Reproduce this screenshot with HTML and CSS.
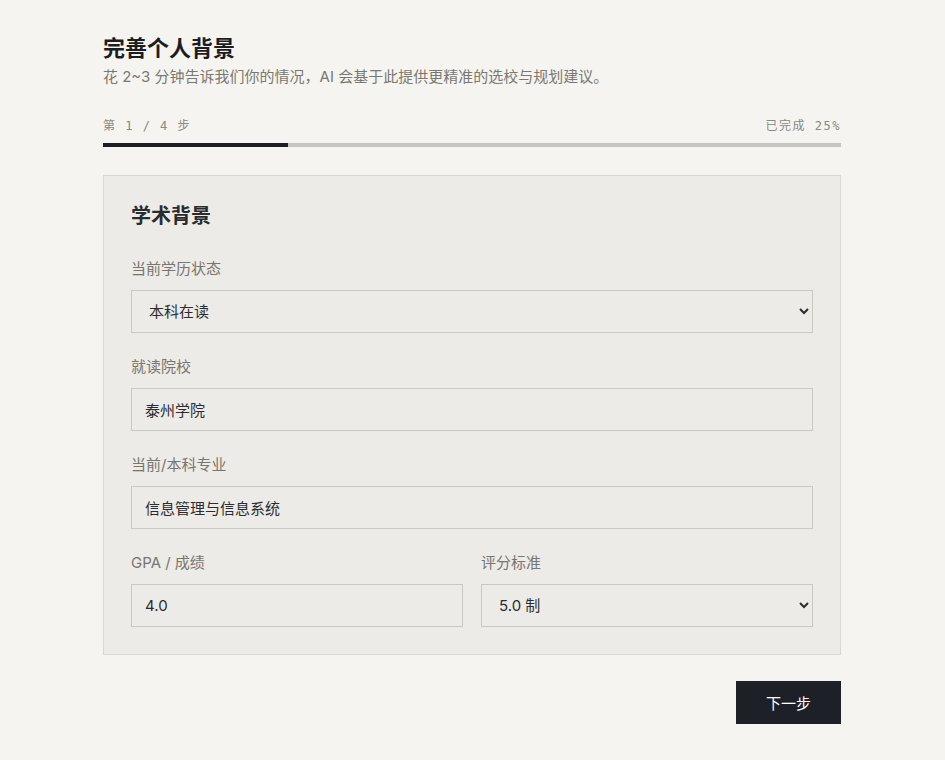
FILE: index.html
```html
<!DOCTYPE html>
<html lang="zh-CN">
<head>
<meta charset="utf-8">
<title>完善个人背景</title>
<link rel="stylesheet" href="styles.css">
</head>
<body>
<main class="page">
  <h1 class="title">完善个人背景</h1>
  <p class="subtitle">花 2~3 分钟告诉我们你的情况，AI 会基于此提供更精准的选校与规划建议。</p>

  <div class="steps">
    <span>第 1 / 4 步</span>
    <span>已完成 25%</span>
  </div>
  <div class="progress"><div class="progress-fill" style="width:25%"></div></div>

  <section class="card">
    <h2 class="card-title">学术背景</h2>

    <div class="field">
      <label class="label" for="status">当前学历状态</label>
      <select class="control" id="status">
        <option>本科在读</option>
        <option>本科毕业</option>
        <option>硕士在读</option>
      </select>
    </div>

    <div class="field">
      <label class="label" for="school">就读院校</label>
      <input class="control" id="school" type="text" value="泰州学院">
    </div>

    <div class="field">
      <label class="label" for="major">当前/本科专业</label>
      <input class="control" id="major" type="text" value="信息管理与信息系统">
    </div>

    <div class="row">
      <div class="field">
        <label class="label" for="gpa">GPA / 成绩</label>
        <input class="control" id="gpa" type="text" value="4.0">
      </div>
      <div class="field">
        <label class="label" for="scale">评分标准</label>
        <select class="control" id="scale">
          <option>5.0 制</option>
          <option>4.0 制</option>
          <option>百分制</option>
        </select>
      </div>
    </div>
  </section>

  <div class="actions">
    <button class="btn-next" type="button">下一步</button>
  </div>
</main>
</body>
</html>
```

FILE: styles.css
```css
* { box-sizing: border-box; }

body {
  margin: 0;
  padding-right: 1px;
  background: #f5f4f0;
  font-family: Inter, "Noto Sans CJK SC", sans-serif;
  color: #1d1f25;
}

.page {
  width: 738px;
  margin: 0 auto;
  padding-top: 33px;
}

.title {
  margin: 0;
  font-size: 22px;
  line-height: 30px;
  font-weight: 700;
  color: #1b1d22;
}

.subtitle {
  margin: 3px 0 0;
  font-size: 15px;
  line-height: 22px;
  color: #7a7873;
}

.steps {
  margin-top: 29px;
  display: flex;
  justify-content: space-between;
  font-family: "DejaVu Sans Mono", "Noto Sans CJK SC", monospace;
  font-size: 12px;
  line-height: 18px;
  letter-spacing: 1.5px;
  color: #8a8883;
}

.progress {
  margin-top: 8px;
  height: 4px;
  background: #c8c6c1;
}

.progress-fill {
  height: 100%;
  background: #1d1f26;
}

.card {
  margin-top: 28px;
  background: #edebe7;
  border: 1px solid #dbd8d2;
  padding: 27px 27px 27px;
}

.card-title {
  margin: 0 0 30px;
  font-size: 20px;
  line-height: 26px;
  font-weight: 600;
  color: #2a2b2f;
}

.field {
  display: flex;
  flex-direction: column;
  margin-bottom: 24px;
}

.card > .field:last-child,
.row .field { margin-bottom: 0; }

.label {
  font-size: 15px;
  line-height: 20px;
  color: #77756f;
  margin-bottom: 11px;
}

.control {
  height: 43px;
  width: 100%;
  border: 1px solid #cbc8c2;
  background: #edebe7;
  border-radius: 0;
  padding: 0 13px;
  font-family: Inter, "Noto Sans CJK SC", sans-serif;
  font-size: 15px;
  color: #2b2c30;
  outline: none;
}

.row {
  display: grid;
  grid-template-columns: 1fr 1fr;
  column-gap: 18px;
}

.actions {
  margin-top: 26px;
  display: flex;
  justify-content: flex-end;
}

.btn-next {
  height: 43px;
  padding: 0 30px;
  background: #1e2028;
  color: #ffffff;
  border: none;
  border-radius: 0;
  font-family: Inter, "Noto Sans CJK SC", sans-serif;
  font-size: 15px;
  cursor: pointer;
}
```
